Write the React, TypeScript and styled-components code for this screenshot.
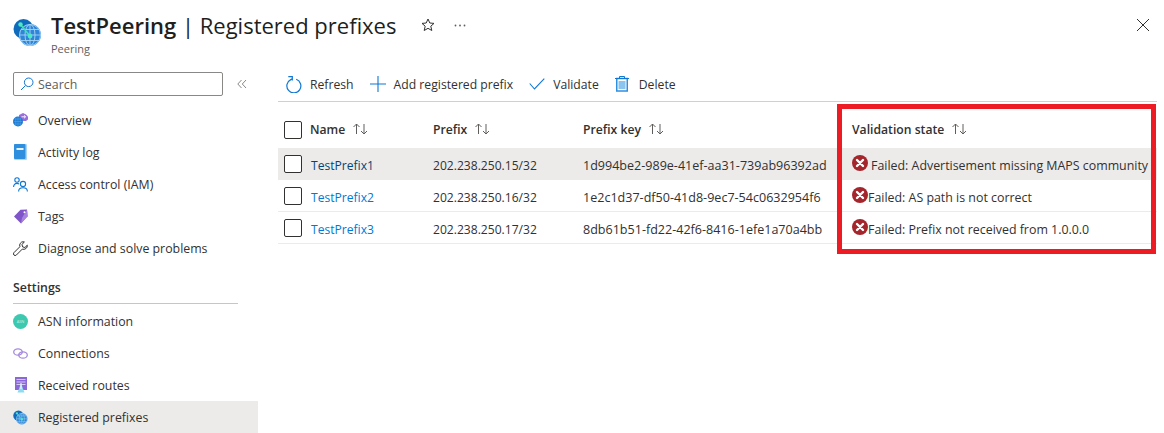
import React from "react";
import styled, { createGlobalStyle } from "styled-components";

const Global = createGlobalStyle`
  html, body { margin: 0; padding: 0; background: #fff; }
  body { font-family: "Open Sans", "Noto Sans", "Liberation Sans", sans-serif; color: #323130; overflow: hidden; }
  #root { width: 1164px; height: 433px; overflow: hidden; }
`;

const Page = styled.div`
  position: relative;
  width: 1164px;
  height: 433px;
  display: flex;
  flex-direction: column;
  overflow: hidden;
`;

const Header = styled.header`
  height: 72px;
  flex: none;
  display: flex;
  align-items: flex-start;
  padding: 13px 0 0 13px;
  box-sizing: border-box;
`;

const HeaderLogo = styled.div`
  width: 29px;
  height: 29px;
  margin-top: 5px;
  margin-right: 9px;
`;

const Titles = styled.div`
  display: flex;
  flex-direction: column;
`;

const Title = styled.h1`
  margin: 0;
  font-size: 22px;
  line-height: 24px;
  font-weight: 400;
  color: #201f1e;
  white-space: nowrap;
`;

const TitleStrong = styled.span`
  font-weight: 600;
`;

const Subtitle = styled.div`
  font-size: 11px;
  line-height: 16px;
  margin-top: 4px;
  color: #605e5c;
`;

const HeaderActions = styled.div`
  display: flex;
  align-items: center;
  gap: 19px;
  margin-left: 25px;
  margin-top: 5px;
`;

const CloseButton = styled.div`
  margin-left: auto;
  margin-right: 14px;
  margin-top: 2px;
  width: 14px;
  height: 14px;
`;

const Body = styled.div`
  flex: 1;
  display: flex;
`;

const Sidebar = styled.nav`
  width: 258px;
  flex: none;
  display: flex;
  flex-direction: column;
`;

const SearchRow = styled.div`
  display: flex;
  align-items: center;
  padding-left: 13px;
  height: 24px;
  margin-bottom: 8px;
`;

const SearchBox = styled.div`
  width: 210px;
  height: 24px;
  box-sizing: border-box;
  border: 1px solid #8a8886;
  border-radius: 2px;
  display: flex;
  align-items: center;
  gap: 4px;
  padding-left: 6px;
  font-size: 12.4px;
  color: #605e5c;
`;

const Collapse = styled.div`
  margin-left: 14px;
  display: flex;
`;

const NavItem = styled.div<{ $active?: boolean }>`
  height: 32px;
  display: flex;
  align-items: center;
  padding-left: 13px;
  gap: 10px;
  font-size: 12.35px;
  color: #323130;
  white-space: nowrap;
  background: ${(p) => (p.$active ? "#edebe9" : "transparent")};
`;

const NavIcon = styled.span`
  width: 15px;
  height: 16px;
  flex: none;
  display: flex;
  align-items: center;
  justify-content: center;
`;

const SectionTitle = styled.div`
  margin: 16px 20px 1px 13px;
  height: 23px;
  font-size: 12.35px;
  font-weight: 600;
  line-height: 16px;
  color: #323130;
  border-bottom: 1px solid #c8c6c4;
`;

const Main = styled.main`
  flex: 1;
  display: flex;
  flex-direction: column;
  padding-left: 20px;
  padding-right: 7px;
`;

const Toolbar = styled.div`
  height: 24px;
  display: flex;
  align-items: center;
  padding: 0 0 5px 8px;
  gap: 16px;
  border-bottom: 1px solid #d2d0ce;
  margin-bottom: 12px;
`;

const ToolButton = styled.div<{ $gap?: number }>`
  display: flex;
  align-items: center;
  gap: ${(p) => p.$gap ?? 8}px;
  font-size: 12.2px;
  color: #323130;
  white-space: nowrap;
`;

const GRID = "32px 123px 150px 269px 1fr";

const HeadRow = styled.div`
  display: grid;
  grid-template-columns: ${GRID};
  height: 32px;
  margin-bottom: 2px;
  align-items: center;
  font-size: 12.2px;
  font-weight: 600;
  color: #323130;
`;

const Row = styled.div<{ $selected?: boolean }>`
  display: grid;
  grid-template-columns: ${GRID};
  height: 32px;
  align-items: center;
  box-sizing: border-box;
  border-bottom: 1px solid #edebe9;
  font-size: 12.1px;
  color: #323130;
  background: ${(p) => (p.$selected ? "#edebe9" : "transparent")};
`;

const CheckCell = styled.div`
  padding-left: 6px;
  display: flex;
`;

const Checkbox = styled.div`
  width: 16px;
  height: 16px;
  border: 1px solid #323130;
  border-radius: 2px;
  background: #fff;
`;

const HeadCell = styled.div`
  display: flex;
  align-items: center;
  gap: 7px;
  white-space: nowrap;
  padding-bottom: 2px;
`;

const Cell = styled.div`
  white-space: nowrap;
  padding-top: 4px;
`;

const NameCell = styled(Cell)`
  padding-left: 1px;
`;

const KeyCell = styled(Cell)`
  font-size: 12.55px;
`;

const LinkText = styled.span<{ $dark?: boolean }>`
  color: ${(p) => (p.$dark ? "#004578" : "#0078d4")};
`;

const StateCell = styled.div`
  display: flex;
  align-items: center;
  white-space: nowrap;
  padding-top: 4px;
  font-size: 12.4px;
`;

const FailIcon = styled.span<{ $gap: number }>`
  display: flex;
  margin-right: ${(p) => p.$gap}px;
  margin-top: -5px;
`;

const Highlight = styled.div`
  position: absolute;
  left: 837px;
  top: 104px;
  width: 319px;
  height: 150px;
  box-sizing: border-box;
  border: 5px solid #ed1c24;
  pointer-events: none;
`;

const Globe = ({ size = 29 }: { size?: number }) => (
  <svg width={size} height={size} viewBox="0 0 29 29">
    <circle cx="10.5" cy="11" r="10" fill="#0f6cbd" />
    <circle cx="17" cy="17" r="11" fill="#2f86d8" />
    <g stroke="#a6d4f5" strokeWidth="0.9" fill="none">
      <ellipse cx="17" cy="17" rx="10.5" ry="10.5" />
      <ellipse cx="17" cy="17" rx="5" ry="10.5" />
      <path d="M6.5 17h21M8 11.5h18M8 22.5h18M17 6.500v21" />
    </g>
    <path d="M7.500 6.500 17 18" stroke="#3ee0b8" strokeWidth="1.6" />
    <circle cx="7.500" cy="6.500" r="2.2" fill="#4fe8c4" />
    <circle cx="17" cy="18" r="2.4" fill="#4fe8c4" />
  </svg>
);

const Fail = () => (
  <svg width="16" height="16" viewBox="0 0 16 16">
    <circle cx="8" cy="8" r="8" fill="#a4262c" />
    <path d="M5 5l6 6M11 5l-6 6" stroke="#fff" strokeWidth="2.4" strokeLinecap="round" />
  </svg>
);

const Sort = () => (
  <svg width="17" height="12" viewBox="0 0 17 12" fill="none" stroke="#605e5c" strokeWidth="1">
    <path d="M4.500 11V1M1.500 4l3-3 3 3" />
    <path d="M12 1v10M9 8l3 3 3-3" />
  </svg>
);

const navTop = [
  {
    label: "Overview",
    icon: (
      <svg width="15" height="14" viewBox="0 0 15 14">
        <path d="M6 2 10 0l3 1.500 2 2V6.500l-2 1.500H8L6 6z" fill="#9a6fdc" />
        <path d="M8.500 3.800h4M11 2.300l1.600 1.500L11 5.300" stroke="#fff" strokeWidth="0.9" fill="none" />
        <circle cx="5" cy="8.500" r="5" fill="#1b78d0" />
        <path d="M.5 8.500h9M5 3.700v9.600M1.300 6h7.400M1.300 11h7.400M2.800 4.500v8M7.200 4.500v8" stroke="#5aa9ea" strokeWidth="0.5" fill="none" />
      </svg>
    ),
  },
  {
    label: "Activity log",
    icon: (
      <svg width="13" height="16" viewBox="0 0 13 16">
        <rect x="0" y="0" width="13" height="16" rx="1" fill="#a9d6f5" />
        <rect x="0" y="0" width="11.500" height="15" rx="1" fill="#2f8fdf" />
        <rect x="2.500" y="4" width="7" height="2" fill="#e6f3fc" />
      </svg>
    ),
  },
  {
    label: "Access control (IAM)",
    icon: (
      <svg width="15" height="15" viewBox="0 0 15 15" fill="none" stroke="#0f78d4" strokeWidth="1.1">
        <circle cx="4" cy="3" r="2.2" />
        <path d="M.6 10c0-2.400 1.400-3.600 3.400-3.600.8 0 1.400.2 2 .6" />
        <circle cx="10" cy="7" r="2.600" />
        <path d="M5.600 14.600c0-2.600 1.800-3.800 4.400-3.800s4.400 1.200 4.400 3.800" />
      </svg>
    ),
  },
  {
    label: "Tags",
    icon: (
      <svg width="14" height="15" viewBox="0 0 14 15">
        <path d="M0 7.500 6.500 0.800 13 .5l.6 6.700L7 14.500z" fill="#7f55c9" />
        <path d="M7 14.500 13.600 7.200 13 .5 8 9z" fill="#a884e0" />
        <circle cx="10.500" cy="3.300" r="1" fill="#fff" />
      </svg>
    ),
  },
  {
    label: "Diagnose and solve problems",
    icon: (
      <svg width="15" height="15" viewBox="0 0 15 15" fill="none" stroke="#323130" strokeWidth="1">
        <path d="M10.300.7a3.700 3.700 0 0 0-3.400 5L.9 11.700a1.700 1.700 0 0 0 2.400 2.400l6-6a3.700 3.700 0 0 0 5-3.900l-2.400 2.300-2.300-.6-.6-2.300L11.300.8a3.700 3.700 0 0 0-1-.1z" />
      </svg>
    ),
  },
];

const navSettings = [
  {
    label: "ASN information",
    icon: (
      <svg width="15" height="15" viewBox="0 0 15 15">
        <circle cx="7.500" cy="7.500" r="7.500" fill="#3cc9b0" />
        <text x="7.500" y="9" fontSize="4" textAnchor="middle" fill="#c4f2e9" fontFamily="Open Sans, sans-serif">
          ASN
        </text>
      </svg>
    ),
  },
  {
    label: "Connections",
    icon: (
      <svg width="15" height="11" viewBox="0 0 15 11" fill="none" stroke="#a78bdf" strokeWidth="1.300">
        <ellipse cx="5" cy="4" rx="4.300" ry="3.200" />
        <ellipse cx="10" cy="7" rx="4.300" ry="3.200" />
      </svg>
    ),
  },
  {
    label: "Received routes",
    icon: (
      <svg width="12" height="16" viewBox="0 0 12 16">
        <rect x="0" y="0" width="12" height="13" fill="#8a68d8" />
        <path d="M1.500 2.500h9M1.500 5h9M1.500 7.500h9" stroke="#d6c8f5" strokeWidth="1" />
        <path d="M6 6.500 9.500 15.500h-7z" fill="#8fdcf0" />
        <path d="M6 6v6" stroke="#fff" strokeWidth="1" />
      </svg>
    ),
  },
];

const rows = [
  {
    name: "TestPrefix1",
    prefix: "202.238.250.15/32",
    key: "1d994be2-989e-41ef-aa31-739ab96392ad",
    state: "Failed: Advertisement missing MAPS community",
    gap: 3,
  },
  {
    name: "TestPrefix2",
    prefix: "202.238.250.16/32",
    key: "1e2c1d37-df50-41d8-9ec7-54c0632954f6",
    state: "Failed: AS path is not correct",
    gap: 0,
  },
  {
    name: "TestPrefix3",
    prefix: "202.238.250.17/32",
    key: "8db61b51-fd22-42f6-8416-1efe1a70a4bb",
    state: "Failed: Prefix not received from 1.0.0.0",
    gap: 0,
  },
];

export default function App() {
  return (
    <Page>
      <Global />
      <Header>
        <HeaderLogo>
          <Globe />
        </HeaderLogo>
        <Titles>
          <Title>
            <TitleStrong>TestPeering</TitleStrong> | Registered prefixes
          </Title>
          <Subtitle>Peering</Subtitle>
        </Titles>
        <HeaderActions>
          <svg width="14" height="14" viewBox="0 0 14 14" fill="none" stroke="#323130" strokeWidth="1">
            <path d="M7 1l1.800 4 4.200.4-3.200 2.800 1 4.300L7 10.300 3.200 12.500l1-4.300L1 5.400 5.200 5z" />
          </svg>
          <svg width="12" height="3" viewBox="0 0 12 3" fill="#605e5c">
            <circle cx="1.500" cy="1.500" r="0.900" />
            <circle cx="6" cy="1.500" r="0.900" />
            <circle cx="10.500" cy="1.500" r="0.900" />
          </svg>
        </HeaderActions>
        <CloseButton>
          <svg width="14" height="14" viewBox="0 0 14 14" stroke="#323130" strokeWidth="1">
            <path d="M1 1l12 12M13 1L1 13" />
          </svg>
        </CloseButton>
      </Header>
      <Body>
        <Sidebar>
          <SearchRow>
            <SearchBox>
              <svg width="14" height="14" viewBox="0 0 14 14" fill="none" stroke="#0f78d4" strokeWidth="1">
                <circle cx="8.700" cy="5.300" r="4.300" />
                <path d="M5.500 8.500 1 13" />
              </svg>
              Search
            </SearchBox>
            <Collapse>
              <svg width="10" height="10" viewBox="0 0 10 10" fill="none" stroke="#8a8886" strokeWidth="1">
                <path d="M4.500 1 .8 5l3.700 4M9 1 5.300 5 9 9" />
              </svg>
            </Collapse>
          </SearchRow>
          {navTop.map((n) => (
            <NavItem key={n.label}>
              <NavIcon>{n.icon}</NavIcon>
              {n.label}
            </NavItem>
          ))}
          <SectionTitle>Settings</SectionTitle>
          {navSettings.map((n) => (
            <NavItem key={n.label}>
              <NavIcon>{n.icon}</NavIcon>
              {n.label}
            </NavItem>
          ))}
          <NavItem $active>
            <NavIcon>
              <Globe size={15} />
            </NavIcon>
            Registered prefixes
          </NavItem>
        </Sidebar>
        <Main>
          <Toolbar>
            <ToolButton>
              <svg width="16" height="17" viewBox="0 0 16 17" fill="none" stroke="#0f78d4" strokeWidth="1.200">
                <path d="M10.200 3.300a7 7 0 1 1-5.400.3L6.300 2.900" />
                <path d="M2.300 .6h4v3.800" />
              </svg>
              Refresh
            </ToolButton>
            <ToolButton>
              <svg width="16" height="16" viewBox="0 0 16 16" stroke="#0f78d4" strokeWidth="1.100">
                <path d="M8 0v16M0 8h16" />
              </svg>
              Add registered prefix
            </ToolButton>
            <ToolButton>
              <svg width="16" height="12" viewBox="0 0 16 12" fill="none" stroke="#0f78d4" strokeWidth="1.100">
                <path d="M.7 5.500 5.500 11 15.300.7" />
              </svg>
              Validate
            </ToolButton>
            <ToolButton $gap={10}>
              <svg width="14" height="16" viewBox="0 0 14 16">
                <rect x="1.750" y="2.500" width="10.500" height="12.500" fill="#fff" stroke="#2f8fe0" strokeWidth="1.500" />
                <rect x="3.500" y="5" width="7" height="8" fill="#8cc4f0" />
                <path d="M0 2.500h14M4.500 2.500V.5h5v2" stroke="#0f78d4" fill="none" />
              </svg>
              Delete
            </ToolButton>
          </Toolbar>
          <HeadRow>
            <CheckCell>
              <Checkbox />
            </CheckCell>
            <HeadCell>
              Name <Sort />
            </HeadCell>
            <HeadCell>
              Prefix <Sort />
            </HeadCell>
            <HeadCell>
              Prefix key <Sort />
            </HeadCell>
            <HeadCell>
              Validation state <Sort />
            </HeadCell>
          </HeadRow>
          {rows.map((r, i) => (
            <Row key={r.name} $selected={i === 0}>
              <CheckCell>
                <Checkbox />
              </CheckCell>
              <NameCell>
                <LinkText $dark={i === 0}>{r.name}</LinkText>
              </NameCell>
              <Cell>{r.prefix}</Cell>
              <KeyCell>{r.key}</KeyCell>
              <StateCell>
                <FailIcon $gap={r.gap}>
                  <Fail />
                </FailIcon>
                {r.state}
              </StateCell>
            </Row>
          ))}
        </Main>
      </Body>
      <Highlight />
    </Page>
  );
}
